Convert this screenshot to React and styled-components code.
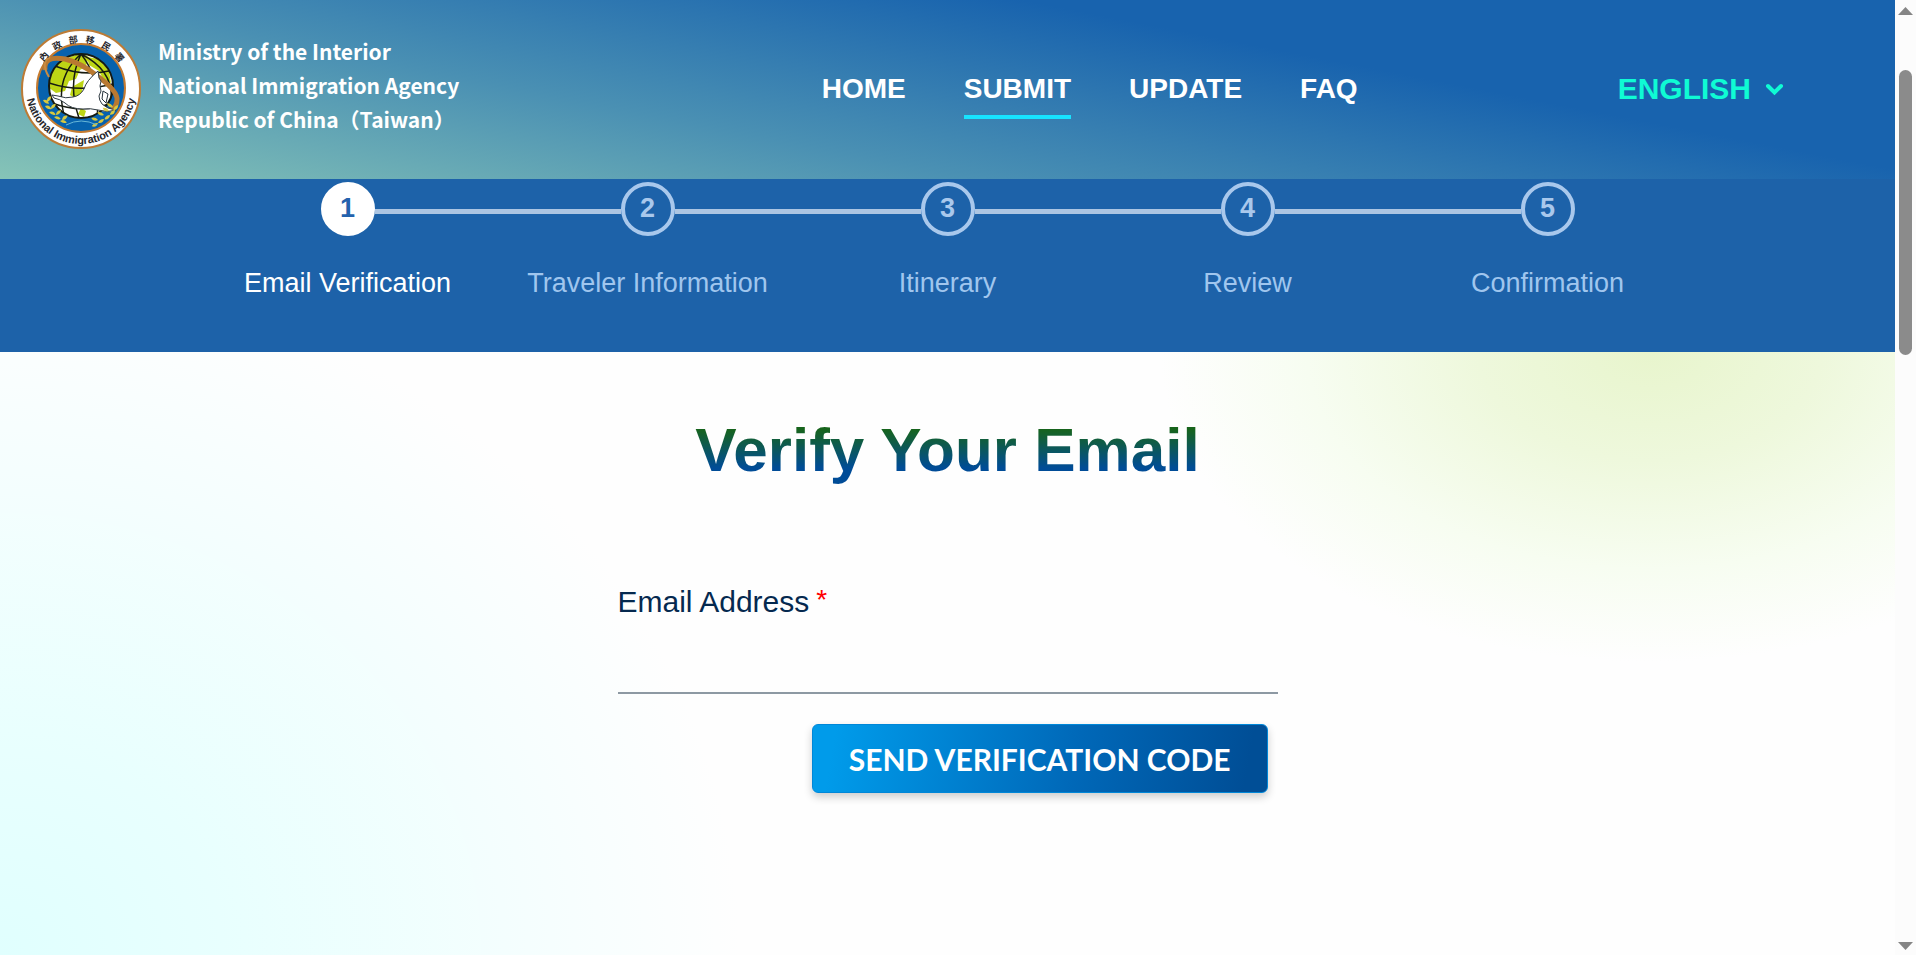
import React from 'react';
import styled, { createGlobalStyle } from 'styled-components';

const GlobalStyle = createGlobalStyle`
  * { box-sizing: border-box; }

  html, body, #root {
    height: 100%;
    margin: 0;
  }

  body {
    font-family: "Liberation Sans", Arial, sans-serif;
    overflow: hidden;
  }
`;

const navItems = ['HOME', 'SUBMIT', 'UPDATE', 'FAQ'];

const steps = [
  'Email Verification',
  'Traveler Information',
  'Itinerary',
  'Review',
  'Confirmation',
];

const Shell = styled.div`
  display: flex;
  height: 100%;
`;

const Page = styled.div`
  flex: 1;
  min-width: 0;
  display: flex;
  flex-direction: column;
`;

const Header = styled.header`
  display: flex;
  align-items: center;
  gap: 260px;
  padding: 29px 111px 30px 21px;
  background: linear-gradient(11deg, #86c4b7 0%, #4a90b3 35%, #1863ae 69%);
`;

const Brand = styled.a`
  display: flex;
  align-items: center;
  gap: 17px;
  margin-right: auto;
  color: #fff;
  text-decoration: none;
  white-space: nowrap;
`;

const BrandText = styled.span`
  padding-bottom: 8px;
  font: 700 21px/34px "Noto Sans CJK TC", sans-serif;
`;

const Nav = styled.nav`
  display: flex;
  gap: 58px;
`;

const NavLink = styled.a`
  padding: 13px 0 10px;
  border-bottom: 4px solid ${({ $active }) => ($active ? '#17e3ff' : 'transparent')};
  color: #fff;
  font-size: 28px;
  font-weight: 700;
  line-height: 32px;
  text-decoration: none;
`;

const LanguageButton = styled.button`
  display: flex;
  align-items: center;
  gap: 14px;
  padding: 0;
  border: 0;
  background: none;
  color: #0ffbd4;
  font: 700 30px/34px "Liberation Sans", Arial, sans-serif;
  cursor: pointer;
`;

const StepBar = styled.ol`
  display: flex;
  justify-content: center;
  margin: 0;
  padding: 3px 0 52px;
  background: #1d62a9;
  list-style: none;
`;

const Step = styled.li`
  flex: 0 1 300px;
  display: flex;
  flex-direction: column;
  gap: 30px;
  color: ${({ $active }) => ($active ? '#fff' : '#a0c6ee')};
  font-size: 27px;
  line-height: 34px;
  text-align: center;
`;

const StepTrack = styled.div`
  display: flex;
  align-items: center;
`;

const StepLine = styled.span`
  flex: 1;
  height: 5px;
  margin-top: 5px;
  background: ${({ $hidden }) => ($hidden ? 'transparent' : '#acc5e2')};
`;

const StepNumber = styled.span`
  width: 54px;
  height: 54px;
  border: 4px solid ${({ $active }) => ($active ? '#fff' : '#a9c8ec')};
  border-radius: 50%;
  background: ${({ $active }) => ($active ? '#fff' : 'transparent')};
  color: ${({ $active }) => ($active ? '#2462ad' : '#a9c8ec')};
  font-weight: 700;
  line-height: 44px;
`;

const Main = styled.main`
  flex: 1;
  display: flex;
  flex-direction: column;
  align-items: center;
  padding-top: 63px;
  background:
    radial-gradient(ellipse 490px 310px at 1650px 0, #e8f5cd 0%, #eef8dc 35%, #f7fdf1 70%, #ffffff00 100%),
    radial-gradient(ellipse 740px 680px at 0 100%, #e0fffe 0%, #e8fffe 30%, #ffffff00 100%),
    #fefefe;
`;

const Title = styled.h1`
  margin: 0;
  background: linear-gradient(#17641c 20%, #004c97 76%);
  background-clip: text;
  color: transparent;
  font-size: 62px;
  line-height: 70px;
`;

const Form = styled.form`
  width: 660px;
  max-width: 100%;
  margin-top: 98px;
  display: flex;
  flex-direction: column;
`;

const Label = styled.label`
  color: #05294f;
  font-size: 30px;
  line-height: 38px;
`;

const Required = styled.span`
  margin-left: 7px;
  color: #f00;
  font-size: 28px;
  line-height: 30px;
  vertical-align: 3px;
`;

const EmailInput = styled.input`
  height: 73px;
  padding: 0 8px;
  border: 0;
  border-bottom: 2px solid #8d99a3;
  background: transparent;
  color: #05294f;
  font: 28px "Liberation Sans", Arial, sans-serif;
  outline: none;
`;

const SendButton = styled.button`
  align-self: flex-end;
  height: 69px;
  margin: 30px 10px 0 0;
  padding: 0 36px;
  border: 1px solid #0087d8;
  border-radius: 6px;
  background: linear-gradient(100deg, #009bea 5%, #0068b8 58%, #004e96 95%);
  box-shadow: 0 4px 8px rgba(0, 0, 0, 0.2);
  color: #fff;
  font: 700 30px Lato, sans-serif;
  white-space: nowrap;
  cursor: pointer;
`;

const ScrollRail = styled.div`
  width: 21px;
  display: flex;
  flex-direction: column;
  align-items: center;
  padding: 7px 0 5px;
  background: #fcfcfc;
`;

const ScrollThumb = styled.div`
  width: 13px;
  height: 285px;
  margin: 55px 0 auto;
  border-radius: 7px;
  background: #8b8b8b;
`;

const ScrollArrow = ({ down }) => (
  <svg width="15" height="8" viewBox="0 0 15 8" fill="#858585">
    <path d={down ? 'M0 0h15L7.500 8z' : 'M0 8h15L7.500 0z'} />
  </svg>
);

const leaves = [
  [22, 71, 40], [24, 77, 35], [28, 83, 30], [33, 88, 25], [39, 92, 20],
  [26, 73, -45], [30, 80, -40], [35, 86, -35], [41, 91, -30],
  [97, 76, 140], [94, 81, 145], [89, 86, 150], [83, 90, 155], [77, 94, 160],
  [92, 78, 220], [88, 82, 215], [83, 86, 210], [77, 91, 205],
];

const Emblem = () => (
  <svg width="120" height="120" viewBox="0 0 120 120" role="img" aria-label="National Immigration Agency">
    <defs>
      <path id="arc-top" d="M13.500 60A46.500 46.500 0 0 1 106.500 60" />
      <path id="arc-bottom" d="M5 60A55 55 0 0 0 115 60" />
      <clipPath id="globe"><circle cx="60" cy="57" r="32" /></clipPath>
    </defs>
    <circle cx="60" cy="60" r="59" fill="#fff" stroke="#bd7b35" strokeWidth="2" />
    <circle cx="60" cy="59" r="44" fill="#0762ad" stroke="#c57b30" strokeWidth="2" />
    {/* globe */}
    <circle cx="60" cy="57" r="32" fill="#fff" />
    <g clipPath="url(#globe)">
      <path d="M28 50q4-14 16-20l16-6 8 4-3 9-6 4-4 9-7 2-4 10-9 2-8-6z" fill="#bdd515" />
      <path d="M66 28l12 2 10 12 2 12-8-4-4-8-10-6z" fill="#bdd515" />
      <path d="M51 58l12-7-2 12-6 7-6-4zM60 79l5 3-2 6-6-3z" fill="#bdd515" />
      <g fill="none" stroke="#161a10" strokeWidth="1.500">
        <path d="M60 25Q32 50 44 89M60 25Q46 54 58 89M60 25Q80 50 76 89M60 25Q94 42 90 74" />
        <path d="M34 37Q62 48 88 42M28 54Q58 64 92 55M31 74Q60 85 88 75" />
      </g>
    </g>
    <circle cx="60" cy="57" r="32" fill="none" stroke="#161a10" strokeWidth="2" />
    {/* orbit ring */}
    <path d="M24 41Q22 26 44 30Q60 34 75 46Q97 62 96 71Q96 77 91 81" fill="none" stroke="#b97931" strokeWidth="5" />
    <path d="M28 48Q19 33 29 28" fill="none" stroke="#c88b42" strokeWidth="2" />
    {/* bird */}
    <path
      d="M31 66l6 1q8 3 15 1q7-1 11-8q2-8 14-18l1 7 2 3-1 5 1 5-2 5q0 4 3 8q5 5 14 6q-8 3-18 0-8-2-15-1-12 0-18-6-5-4-11-5z"
      fill="#fff"
      stroke="#303b42"
    />
    <path d="M82 62l5 3-2 9-4-4z" fill="#fff" stroke="#25313a" />
    {/* laurel */}
    <g fill="#d8c83f">
      {leaves.map(([x, y, angle]) => (
        <path key={`${x}-${y}`} d="M0 0q3-4 7-1q-3 3-7 1z" transform={`translate(${x} ${y}) rotate(${angle})`} />
      ))}
    </g>
    <path d="M45 96q15-8 31 0" fill="none" stroke="#68b7d8" />
    <text fontFamily="Noto Sans CJK TC, sans-serif" fontSize="9" fontWeight="700" fill="#26262b">
      {['內', '政', '部', '移', '民', '署'].map((char, i) => (
        <textPath key={char} href="#arc-top" startOffset={`${23 + i * 11}%`} textAnchor="middle">{char}</textPath>
      ))}
    </text>
    <text fontFamily="Liberation Sans, Arial, sans-serif" fontSize="11" fontWeight="700" fill="#26262b">
      <textPath href="#arc-bottom" startOffset="50%" textAnchor="middle">National Immigration Agency</textPath>
    </text>
  </svg>
);

const App = () => (
  <Shell>
    <GlobalStyle />
    <Page>
      <Header>
        <Brand href="#">
          <Emblem />
          <BrandText>
            Ministry of the Interior<br />
            National Immigration Agency<br />
            Republic of China（Taiwan）
          </BrandText>
        </Brand>
        <Nav>
          {navItems.map((item) => (
            <NavLink key={item} href="#" $active={item === 'SUBMIT'}>{item}</NavLink>
          ))}
        </Nav>
        <LanguageButton type="button">
          ENGLISH
          <svg width="19" height="13" viewBox="0 0 19 13" fill="none" stroke="currentColor" strokeWidth="4" strokeLinecap="round">
            <path d="M3 3l6.500 6.500L16 3" />
          </svg>
        </LanguageButton>
      </Header>
      <StepBar>
        {steps.map((step, i) => (
          <Step key={step} $active={i === 0}>
            <StepTrack>
              <StepLine $hidden={i === 0} />
              <StepNumber $active={i === 0}>{i + 1}</StepNumber>
              <StepLine $hidden={i === steps.length - 1} />
            </StepTrack>
            <span>{step}</span>
          </Step>
        ))}
      </StepBar>
      <Main>
        <Title>Verify Your Email</Title>
        <Form>
          <Label htmlFor="email">Email Address<Required>*</Required></Label>
          <EmailInput id="email" type="email" />
          <SendButton type="button">SEND VERIFICATION CODE</SendButton>
        </Form>
      </Main>
    </Page>
    <ScrollRail>
      <ScrollArrow />
      <ScrollThumb />
      <ScrollArrow down />
    </ScrollRail>
  </Shell>
);

export default App;
